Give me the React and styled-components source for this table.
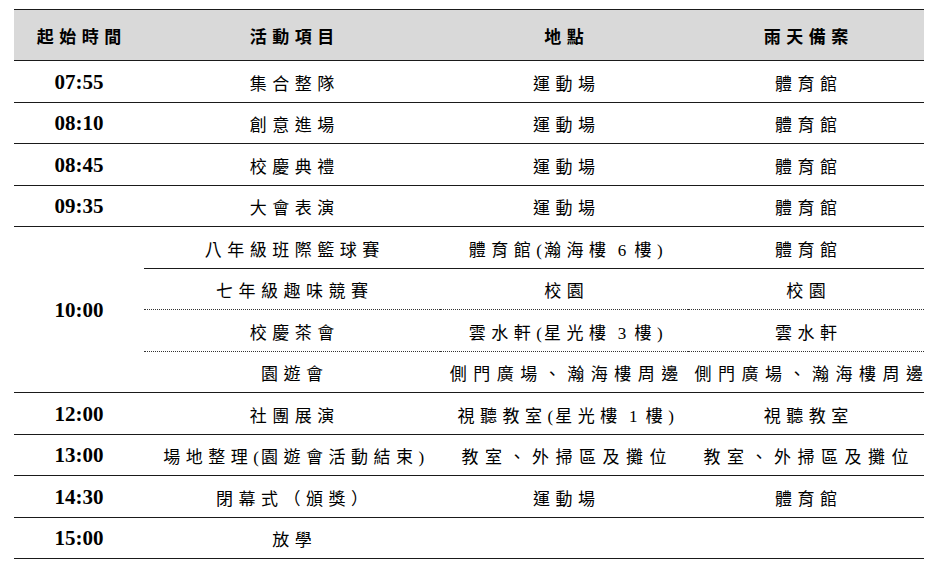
import React from 'react';
import styled, { createGlobalStyle } from 'styled-components';

const GlobalStyle = createGlobalStyle`
  html, body {
    margin: 0;
    padding: 0;
    background: #ffffff;
  }
`;

const Page = styled.div`
  padding: 9px 16px 0 14px;
`;

const Table = styled.table`
  width: 910px;
  border-collapse: collapse;
  table-layout: fixed;
  font-family: "Liberation Serif", "Noto Sans CJK TC", serif;
  color: #000;
  border-top: 1.5px solid #1a1a1a;
`;

const Col = styled.col`
  width: ${p => p.w}px;
`;

const HeadCell = styled.th`
  height: 50px;
  background: #d9d9d9;
  font-size: 17px;
  font-weight: 700;
  letter-spacing: 5.5px;
  padding: 0 0 0 5.5px;
  text-align: center;
  vertical-align: middle;
  border-bottom: 1.5px solid #1a1a1a;
`;

const Cell = styled.td`
  height: 41.5px;
  padding: 2px 0 0 ${p => (p.wide ? 6.5 : 5.5)}px;
  box-sizing: border-box;
  text-align: center;
  vertical-align: middle;
  font-size: 17px;
  font-weight: 400;
  letter-spacing: ${p => (p.wide ? 6.5 : 5.5)}px;
  white-space: nowrap;
  overflow: visible;
  border-bottom: ${p => (p.dotted ? '1px dotted #333' : '1.5px solid #1a1a1a')};
`;

const Latin = styled.span`
  letter-spacing: 2px;
`;

const TimeCell = styled.td`
  padding: 2px 0 0;
  text-align: center;
  vertical-align: middle;
  font-size: 21px;
  font-weight: 700;
  border-bottom: 1.5px solid #1a1a1a;
`;

// Latin runs (digits, spaces, half-width parens) keep tight spacing
const Text = ({ children }) => {
  const parts = String(children).split(/([ -~]+)/);
  return parts.map((p, i) =>
    /^[ -~]+$/.test(p) ? <Latin key={i}>{p}</Latin> : <React.Fragment key={i}>{p}</React.Fragment>
  );
};

const rowsBefore = [
  ['07:55', '集合整隊', '運動場', '體育館'],
  ['08:10', '創意進場', '運動場', '體育館'],
  ['08:45', '校慶典禮', '運動場', '體育館'],
  ['09:35', '大會表演', '運動場', '體育館'],
];

const group = [
  { act: '八年級班際籃球賽', place: '體育館(瀚海樓 6 樓)', rain: '體育館', line: 'solid' },
  { act: '七年級趣味競賽', place: '校園', rain: '校園', line: 'dotted' },
  { act: '校慶茶會', place: '雲水軒(星光樓 3 樓)', rain: '雲水軒', line: 'dotted' },
  { act: '園遊會', place: '側門廣場、瀚海樓周邊', rain: '側門廣場、瀚海樓周邊', line: 'solid', wide: true },
];

const rowsAfter = [
  { time: '12:00', act: '社團展演', place: '視聽教室(星光樓 1 樓)', rain: '視聽教室' },
  { time: '13:00', act: '場地整理(園遊會活動結束)', place: '教室、外掃區及攤位', rain: '教室、外掃區及攤位', wide: true },
  { time: '14:30', act: '閉幕式（頒獎）', place: '運動場', rain: '體育館' },
  { time: '15:00', act: '放學', place: '', rain: '' },
];

export default function App() {
  return (
    <Page>
      <GlobalStyle />
      <Table>
        <colgroup>
          <Col w={130} />
          <Col w={296} />
          <Col w={248} />
          <Col w={236} />
        </colgroup>
        <thead>
          <tr>
            <HeadCell>起始時間</HeadCell>
            <HeadCell>活動項目</HeadCell>
            <HeadCell>地點</HeadCell>
            <HeadCell>雨天備案</HeadCell>
          </tr>
        </thead>
        <tbody>
          {rowsBefore.map(([time, act, place, rain]) => (
            <tr key={time}>
              <TimeCell>{time}</TimeCell>
              <Cell>{act}</Cell>
              <Cell>{place}</Cell>
              <Cell>{rain}</Cell>
            </tr>
          ))}
          {group.map((g, i) => (
            <tr key={g.act}>
              {i === 0 && <TimeCell rowSpan={group.length}>10:00</TimeCell>}
              <Cell dotted={g.line === 'dotted'}>{g.act}</Cell>
              <Cell dotted={g.line === 'dotted'} wide={g.wide}><Text>{g.place}</Text></Cell>
              <Cell dotted={g.line === 'dotted'} wide={g.wide}>{g.rain}</Cell>
            </tr>
          ))}
          {rowsAfter.map(r => (
            <tr key={r.time}>
              <TimeCell>{r.time}</TimeCell>
              <Cell><Text>{r.act}</Text></Cell>
              <Cell wide={r.wide}><Text>{r.place}</Text></Cell>
              <Cell wide={r.wide}>{r.rain}</Cell>
            </tr>
          ))}
        </tbody>
      </Table>
    </Page>
  );
}
